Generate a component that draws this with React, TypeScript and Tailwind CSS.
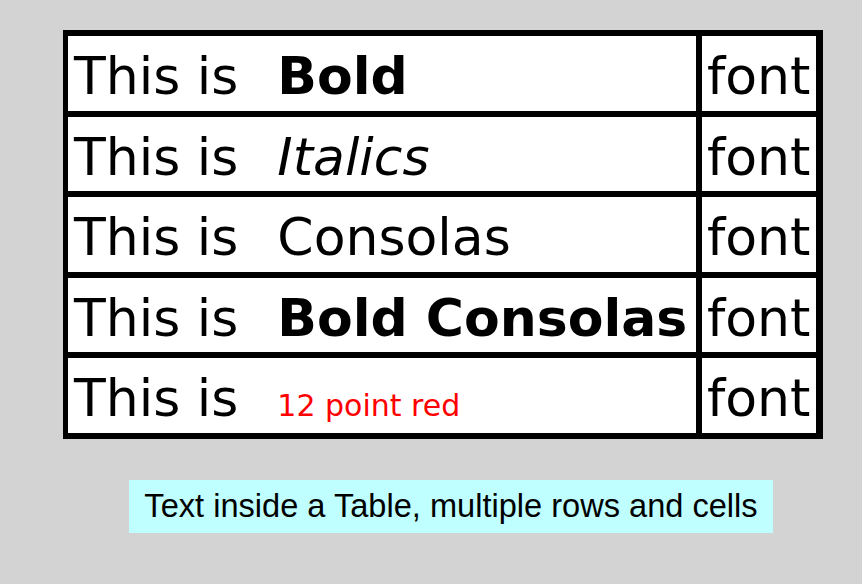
import React from "react";

const rows: { label: React.ReactNode }[] = [
  { label: <span className="font-bold">Bold</span> },
  { label: <span className="italic">Italics</span> },
  { label: <span>Consolas</span> },
  { label: <span className="font-bold">Bold Consolas</span> },
  { label: <span className="text-[30px] text-[#ff0000]">12 point red</span> },
];

export default function App() {
  return (
    <div className="min-h-[584px] w-[862px] bg-[#d3d3d3] pt-[30px] pl-[63px]" style={{ fontFamily: '"DejaVu Sans", Verdana, sans-serif' }}>
      <div className="grid h-[409px] w-[760px] grid-cols-[628px_114px] grid-rows-5 gap-x-[6px] gap-y-[6px] bg-black pt-[6px] pr-[7px] pb-[6px] pl-[5px] text-[52px] text-black">
        {rows.map((r, i) => (
          <React.Fragment key={i}>
            <div className="flex items-baseline whitespace-nowrap bg-white pl-[6px] pt-[5px] leading-[70px]">
              <span>This is</span>
              <span className="ml-[39px]">{r.label}</span>
            </div>
            <div className="whitespace-nowrap bg-white pl-[5px] pt-[5px] leading-[70px]">font</div>
          </React.Fragment>
        ))}
      </div>
      <div className="ml-[66px] mt-[41px] flex h-[53px] w-[644px] items-center justify-center bg-[#bfffff] text-[32.6px] text-black" style={{ fontFamily: '"Liberation Sans", Arial, sans-serif' }}>
        Text inside a Table, multiple rows and cells
      </div>
    </div>
  );
}
